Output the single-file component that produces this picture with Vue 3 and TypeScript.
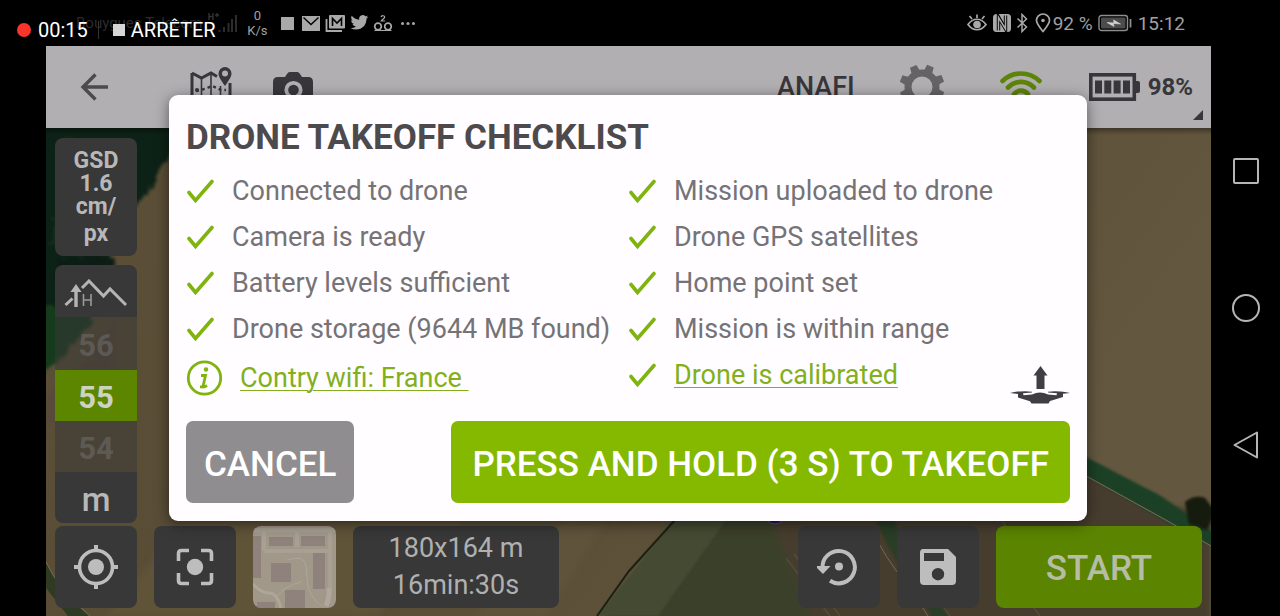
<script setup lang="ts">
import { ref } from 'vue'

const altitude = ref<number>(55)
const leftChecks: string[] = [
  'Connected to drone',
  'Camera is ready',
  'Battery levels sufficient',
  'Drone storage (9644 MB found)',
]
const rightChecks: string[] = [
  'Mission uploaded to drone',
  'Drone GPS satellites',
  'Home point set',
  'Mission is within range',
]
const gearTeeth: number[] = [22, 67, 112, 157, 202, 247, 292, 337]
</script>

<template>
  <div class="screen">
    <header class="status">
      <span class="carrier">Bouygues Telecom</span>
      <svg class="signal" width="30" height="22" viewBox="0 0 30 22" aria-hidden="true">
        <path d="M2 1v7M6 1v7M2 4.500h4M8 3h4M10 1v4" stroke="#333" stroke-width="1.400" fill="none" />
        <path d="M12.500 18v2M17 15v5M21.500 11v9M25 7v13M29 3v17" stroke="#2c2c2c" stroke-width="2" />
      </svg>
      <div class="rate"><span>0</span><span>K/s</span></div>
      <svg class="notif" width="138" height="20" viewBox="0 0 138 20" aria-hidden="true">
        <rect x="1" y="4" width="13" height="13" fill="#a9a9a9" />
        <rect x="22" y="3" width="18" height="15" fill="#a9a9a9" />
        <path d="M23.500 4.500l7.500 7 7.500-7" fill="none" stroke="#000" stroke-width="1.400" />
        <path d="M46.500 6v12H62" fill="none" stroke="#a9a9a9" stroke-width="1.800" />
        <rect x="49" y="2" width="16" height="13.500" rx="1" fill="#a9a9a9" />
        <path d="M52.500 13V5.500l4.500 4.500 4.500-4.500V13" fill="none" stroke="#000" stroke-width="1.600" />
        <g transform="translate(70.500 .5) scale(.74)">
          <path fill="#a9a9a9" d="M23.950 4.570a10 10 0 0 1-2.820.77 4.960 4.960 0 0 0 2.160-2.720c-.95.550-2 .950-3.120 1.180a4.920 4.920 0 0 0-8.380 4.480C7.690 8.100 4.070 6.130 1.640 3.160a4.820 4.820 0 0 0-.67 2.480c0 1.710.87 3.210 2.190 4.100a4.900 4.900 0 0 1-2.230-.620v.060a4.920 4.920 0 0 0 3.950 4.830 5 5 0 0 1-2.210.080 4.940 4.940 0 0 0 4.600 3.420A9.870 9.870 0 0 1 0 19.540a13.940 13.940 0 0 0 7.550 2.210c9.050 0 14-7.500 14-13.990 0-.21 0-.420-.02-.630a9.940 9.940 0 0 0 2.420-2.560z" />
        </g>
        <g fill="none" stroke="#a9a9a9" stroke-width="1.700">
          <circle cx="98" cy="13.500" r="3.300" /><circle cx="108" cy="13.500" r="3.300" />
          <path d="M94.500 17.500h17M101 4.200c.4-2 4-2 3.600.2-.2 1.200-2.600 2.200-3.400 3.600h4" stroke-width="1.200" />
        </g>
        <g fill="#a9a9a9"><circle cx="122.500" cy="10.500" r="1.500" /><circle cx="128" cy="10.500" r="1.500" /><circle cx="133.500" cy="10.500" r="1.500" /></g>
      </svg>
      <div class="status-right">
        <svg width="68" height="20" viewBox="0 0 68 20" aria-hidden="true">
          <g fill="none" stroke="#a9a9a9" stroke-width="1.700">
            <path d="M1 11.500c5-7 13-7 18 0-5 7-13 7-18 0zM10 5V1.500M5 6L2.500 3M15 6l2.500-3" />
            <circle cx="10" cy="11.500" r="3" fill="#a9a9a9" />
          </g>
          <rect x="26" y="1" width="18" height="18" rx="3.500" fill="#a9a9a9" />
          <path d="M31.500 17.500V4l7 12V2.500" fill="none" stroke="#000" stroke-width="3.400" />
          <path d="M31.500 18V4.500l7 11.500V2" fill="none" stroke="#a9a9a9" stroke-width="1.500" />
          <path d="M50.500 5.500l9 8.500-4.500 4.500v-17l4.500 4.500-9 8.500" fill="none" stroke="#a9a9a9" stroke-width="1.500" />
        </svg>
        <svg width="16" height="20" viewBox="0 0 16 20" aria-hidden="true">
          <path d="M8 18.500C4 13.500 1.500 10.500 1.500 7.500a6.500 6.500 0 0 1 13 0c0 3-2.500 6-6.500 11z" fill="none" stroke="#a9a9a9" stroke-width="1.700" />
          <circle cx="8" cy="7.500" r="1.800" fill="#a9a9a9" />
        </svg>
        <span class="pct">92 %</span>
        <svg class="phone-batt" width="34" height="18" viewBox="0 0 34 18" aria-hidden="true">
          <rect x="1" y="1.500" width="28.500" height="15" rx="2.500" fill="none" stroke="#8d8d8d" stroke-width="1.400" />
          <rect x="3" y="3.500" width="24.500" height="11" rx="1" fill="#4c4c4c" />
          <path d="M9 8.500l7 .5-.5-3 7 4-7-.5.5 3z" fill="#d5d5d5" stroke="#d5d5d5" stroke-width=".6" />
          <path d="M32.500 5v8.500" stroke="#8d8d8d" stroke-width="1.800" />
        </svg>
        <span class="clock">15:12</span>
      </div>
      <div class="recorder">
        <span class="rec-dot"></span>
        <span>00:15</span>
        <span class="rec-sep"></span>
        <button type="button" class="rec-stop"><span class="rec-square"></span>ARRÊTER</button>
      </div>
    </header>

    <main class="app">
      <div class="topbar">
        <button type="button" class="tool back" aria-label="Back">
          <svg width="28" height="28" viewBox="0 0 28 28"><path d="M28 14H4M15.500 1.500L3 14l12.500 12.500" fill="none" stroke="#4c4a4d" stroke-width="3.400" /></svg>
        </button>
        <button type="button" class="tool missions" aria-label="Missions">
          <svg width="42" height="42" viewBox="0 0 42 42">
            <path d="M2 7v28l9.500 4 9.500-4 9.500 4 9.500-4V17M2 7l9.500 5L21 7l6 3.500" fill="none" stroke="#38363a" stroke-width="3" />
            <path d="M11.500 12v27M21 7v28M30.500 20v19" fill="none" stroke="#38363a" stroke-width="1.600" />
            <path d="M6 25l5-1 6-2 5-2 5 2 4 2h5" fill="none" stroke="#38363a" stroke-width="2.400" stroke-dasharray="3 3" />
            <circle cx="7" cy="24" r="2" fill="#38363a" />
            <path fill="#38363a" fill-rule="evenodd" d="M35 20c-4-6-6.500-9-6.500-12.500a6.500 6.500 0 0 1 13 0C41.500 11 39 14 35 20zm0-15.500a3 3 0 1 0 0 6 3 3 0 0 0 0-6z" />
          </svg>
        </button>
        <button type="button" class="tool camera" aria-label="Camera">
          <svg width="40" height="32" viewBox="0 0 40 32">
            <path fill="#38363a" d="M5 6h7l2-3q1-2 3-2h7q2 0 3 2l2 3h6q5 0 5 5v16q0 5-5 5H5q-5 0-5-5V11q0-5 5-5z" />
            <circle cx="20.500" cy="19" r="7.200" fill="none" stroke="#b1afb2" stroke-width="3.800" />
          </svg>
        </button>
        <span class="model">ANAFI</span>
        <button type="button" class="tool" aria-label="Settings">
          <svg width="46" height="46" viewBox="-23 -23 46 46">
            <circle r="14" fill="none" stroke="#656366" stroke-width="7" />
            <path v-for="a in gearTeeth" :key="a" :transform="`rotate(${a})`" d="M-4.500-15L-3.500-22.500h7L4.500-15z" fill="#656366" />
          </svg>
        </button>
        <svg class="wifi" width="44" height="34" viewBox="0 0 44 34" aria-label="Signal" role="img">
          <g fill="none" stroke="#5c8406" stroke-width="4.600" stroke-linecap="round">
            <path d="M3.500 11C14 1 30 1 40.500 11M9 17.500c7.500-7.500 18.500-7.500 26 0M15 24c4-4.500 10-4.500 14 0" />
          </g>
          <circle cx="22" cy="29.500" r="3.200" fill="#5c8406" />
        </svg>
        <div class="drone-batt">
          <svg width="51" height="28" viewBox="0 0 51 28" aria-hidden="true">
            <rect x="1.800" y="1.800" width="43.500" height="24.400" fill="none" stroke="#38363a" stroke-width="3.600" />
            <path d="M47 8h2q2 0 2 2v8q0 2-2 2h-2z" fill="#38363a" />
            <path d="M6 7.500h7v13H6zM15.300 7.500h7v13h-7zM24.600 7.500h7v13h-7zM34 7.500h7v13h-7z" fill="#38363a" />
          </svg>
          <span>98%</span>
        </div>
        <span class="corner"></span>
      </div>

      <section class="mission">
        <svg class="map" viewBox="0 0 1165 488" preserveAspectRatio="xMidYMid slice" aria-hidden="true">
          <defs>
            <filter id="soft" x="-10%" y="-10%" width="120%" height="120%"><feGaussianBlur stdDeviation="3" /></filter>
            <filter id="edge" x="-10%" y="-10%" width="120%" height="120%"><feGaussianBlur stdDeviation="1" /></filter>
            <filter id="leaf" x="-10%" y="-10%" width="120%" height="120%">
              <feTurbulence type="fractalNoise" baseFrequency=".09" numOctaves="3" seed="4" result="n" />
              <feDisplacementMap in="SourceGraphic" in2="n" scale="16" xChannelSelector="R" yChannelSelector="G" />
              <feGaussianBlur stdDeviation="1.5" />
            </filter>
            <linearGradient id="ground" x1="0" x2="1" y1="0" y2=".3">
              <stop offset="0" stop-color="#5c4f38" /><stop offset=".5" stop-color="#584c35" /><stop offset="1" stop-color="#63573f" />
            </linearGradient>
            <linearGradient id="shade" x1="0" x2="0" y1="0" y2="1">
              <stop offset="0" stop-color="#000" stop-opacity=".35" /><stop offset="1" stop-color="#000" stop-opacity="0" />
            </linearGradient>
          </defs>
          <rect width="1165" height="488" fill="url(#ground)" />
          <g filter="url(#soft)">
            <path d="M60 488L140 392H420L330 488z" fill="#5f5238" />
            <path d="M0 270L40 230 70 190V260L0 300z" fill="#574a3a" />
            <path d="M430 488L520 392H560L500 488z" fill="#61533a" />
            <path d="M700 380H1165V500H740z" fill="#463e2d" />
            <path d="M551 500L638 380H720L770 500z" fill="#3b412a" />
            <path d="M1042 340L1165 410V500H990V380z" fill="#473e2d" />
          </g>
          <path d="M551 488L629 392H680L612 488z" fill="#444b31" filter="url(#edge)" />
          <g filter="url(#leaf)">
            <path d="M-12-12H150L116 42 100 68 82 82 68 128 62 158 40 196 22 220-12 248z" fill="#0e2418" />
            <path d="M10 130h60l-14 40H10z" fill="#0b1c13" />
            <path d="M20 10l60 12-12 40-46-14zM6 90l54 8-14 30-40-8z" fill="#122a1b" />
            <path d="M-12 180h30l30 14-40 42-20 16z" fill="#173a1d" />
          </g>
          <path d="M551 488L583 443 629 392" fill="none" stroke="#1c2115" stroke-width="2" />
          <g fill="none" stroke="#5e563e" stroke-width="2" opacity=".5">
            <path d="M740 430l44 58M748 426l46 62M880 455l24 33M970 455l24 33M1046 400l60 30M956 392l14 24" />
          </g>
          <path d="M1030 324L1042 330 1115 368 1170 406V420L1118 392 1042 349 1030 342z" fill="#1d4128" filter="url(#edge)" />
          <path d="M1036 346L1042 349 1118 391 1165 418" fill="none" stroke="#73705a" stroke-width="1" />
          <path d="M828 388q14 34 30 56t30 48h16q-18-28-30-50t-28-54z" fill="#1d3d23" opacity=".65" filter="url(#edge)" />
          <path d="M824 400q16 30 34 54t24 34" fill="none" stroke="#6b6b57" stroke-width="1" />
          <path d="M1139 374q10-8 20-4l10 14-8 18-18-6z" fill="#121c0e" filter="url(#edge)" />
          <path d="M0 434q14 30 44 54H22L0 460z" fill="#2f3a23" />
          <path d="M0 434q14 30 44 54" fill="none" stroke="#777059" stroke-width="1" />
          <circle cx="729" cy="386" r="10" fill="#2b1659" stroke="#5b48a0" stroke-width="1" />
          <rect width="1165" height="7" fill="url(#shade)" />
        </svg>

        <div class="side">
          <div class="gsd"><span>GSD</span><span>1.6</span><span>cm/</span><span class="px">px</span></div>
          <div class="altitude">
            <div class="alt-head">
              <svg width="64" height="28" viewBox="0 0 64 28" aria-hidden="true">
                <path d="M1.500 26l7-6.500M18 9l7-7 14.500 15 6.500-7L62 26" fill="none" stroke="#b5b5b5" stroke-width="3" />
                <path d="M10.300 28V13H6.500l5.500-8 5.500 8h-3.800v15z" fill="#b5b5b5" />
                <path d="M19.500 15v12M27 15v12M19.500 21H27" fill="none" stroke="#9a9a9a" stroke-width="1.600" />
              </svg>
            </div>
            <button type="button" class="alt-side" @click="altitude++">{{ altitude + 1 }}</button>
            <output class="alt-now">{{ altitude }}</output>
            <button type="button" class="alt-side" @click="altitude--">{{ altitude - 1 }}</button>
            <div class="alt-unit">m</div>
          </div>
        </div>

        <div class="bottom">
          <button type="button" class="tile" aria-label="Centre on me">
            <svg width="46" height="46" viewBox="-23 -23 46 46">
              <circle r="16.500" fill="none" stroke="#bdbdbd" stroke-width="3.600" /><circle r="8" fill="#bdbdbd" />
              <path d="M0-22v5M0 22v-5M-22 0h5M22 0h-5" stroke="#bdbdbd" stroke-width="4" />
            </svg>
          </button>
          <button type="button" class="tile" aria-label="Centre on mission">
            <svg width="38" height="38" viewBox="-19 -19 38 38">
              <circle r="8.200" fill="#bdbdbd" />
              <path d="M-16.500-6v-7.500q0-3 3-3H-6M6-16.500h7.500q3 0 3 3V-6M16.500 6v7.500q0 3-3 3H6M-6 16.500h-7.500q-3 0-3-3V6" fill="none" stroke="#bdbdbd" stroke-width="3.600" />
            </svg>
          </button>
          <button type="button" class="tile layer" aria-label="Map style">
            <svg width="83" height="82" viewBox="0 0 83 82">
              <rect width="83" height="82" fill="#a1988a" />
              <path d="M0 4h83M11 5v20M44 5v16M11 25h66M77 5v60" fill="none" stroke="#a8a092" stroke-width="4" />
              <path d="M24 70q8-10 24-14M34 34q18-6 19 6t2 20q4 14 14 20" fill="none" stroke="#aea698" stroke-width="1" />
              <path d="M0 58q8 9 16 9t12 15" fill="none" stroke="#aea698" stroke-width="3" />
              <path d="M16 11h24v9H16zM48 10h24v10H48zM0 10h8v42H0zM18 37h20v19H18zM60 27h12v36H60zM32 64h20v18H32zM4 76h18v6H4z" fill="#8f817b" />
              <path d="M76 62q1 8-3 18" fill="none" stroke="#b0a89c" stroke-width="5" />
            </svg>
          </button>
          <div class="stats"><span>180x164 m</span><span>16min:30s</span></div>
          <button type="button" class="tile push" aria-label="Restore">
            <svg width="44" height="38" viewBox="2 0 44 38">
              <path d="M7.500 20A16.200 16.200 0 1 1 15 32.800" fill="none" stroke="#bdbdbd" stroke-width="4" />
              <path d="M0 18h15.500L8 26z" fill="#bdbdbd" /><circle cx="24" cy="18.500" r="4" fill="#bdbdbd" />
            </svg>
          </button>
          <button type="button" class="tile" aria-label="Save">
            <svg width="38" height="38" viewBox="0 0 38 38">
              <path fill="#bdbdbd" fill-rule="evenodd" d="M4 1h25l8 8v24q0 4-4 4H5q-4 0-4-4V5q0-4 3-4zM5 5v8h20V5zM19 20a6.200 6.200 0 1 0 0 12.400A6.200 6.200 0 0 0 19 20z" />
            </svg>
          </button>
          <button type="button" class="start">START</button>
        </div>
      </section>
    </main>

    <nav class="sysnav">
      <button type="button" aria-label="Recent apps"><svg width="28" height="28" viewBox="0 0 28 28"><rect x="2" y="2" width="24" height="24" rx="1" /></svg></button>
      <button type="button" aria-label="Home"><svg width="28" height="28" viewBox="0 0 28 28"><circle cx="14" cy="14" r="13" /></svg></button>
      <button type="button" aria-label="Back"><svg width="28" height="28" viewBox="0 0 28 28"><path d="M25 1.500v25L2.500 14z" stroke-linejoin="round" /></svg></button>
    </nav>

    <div class="overlay">
      <div class="dialog" role="dialog" aria-labelledby="dlg-title">
        <h1 id="dlg-title">DRONE TAKEOFF CHECKLIST</h1>
        <div class="lists">
          <ul>
            <li v-for="t in leftChecks" :key="t">
              <svg class="tick" width="28" height="26" viewBox="0 0 28 26" aria-hidden="true"><path d="M3 14.500l6.500 8L26 3.500" /></svg>{{ t }}
            </li>
            <li class="info">
              <svg width="36" height="36" viewBox="0 0 36 36" aria-hidden="true">
                <circle cx="18.500" cy="18" r="16.200" fill="none" stroke="#7fb30d" stroke-width="2.800" />
                <circle cx="20" cy="9.500" r="2.200" fill="#7fb30d" />
                <path d="M15 15.500h4.500L17 26.500q0 1.500 4-1M14 26.800h5" fill="none" stroke="#7fb30d" stroke-width="2.800" />
              </svg>
              <a href="#">Contry wifi: France&nbsp;</a>
            </li>
          </ul>
          <ul>
            <li v-for="t in rightChecks" :key="t">
              <svg class="tick" width="28" height="26" viewBox="0 0 28 26" aria-hidden="true"><path d="M3 14.500l6.500 8L26 3.500" /></svg>{{ t }}
            </li>
            <li>
              <svg class="tick" width="28" height="26" viewBox="0 0 28 26" aria-hidden="true"><path d="M3 14.500l6.500 8L26 3.500" /></svg>
              <a href="#">Drone is calibrated</a>
              <svg class="drone" width="60" height="38" viewBox="0 0 60 38" aria-hidden="true">
                <g fill="#403e42">
                  <path d="M30.500 0l7 9.500H34.500v13.500h-8V9.500H23.500z" />
                  <path d="M0 27q6-1.800 10-1.600 7-.6 12 .4v.8l-9 .6.500 2 8.500-.7q4-2 8-2t8 2l8.500.7.5-2-9-.6v-.8q5-1 12-.4 4-.2 10 1.600l-7 .8v3.200l-13 4-1.500 2.500h-17L20 35.200 8 31.500V28z" />
                </g>
              </svg>
            </li>
          </ul>
        </div>
        <div class="actions">
          <button type="button" class="cancel">CANCEL</button>
          <button type="button" class="takeoff">PRESS AND HOLD (3 S) TO TAKEOFF</button>
        </div>
      </div>
    </div>
  </div>
</template>

<style>
body { margin: 0; background: #000; }
</style>

<style scoped>
.screen {
  display: grid;
  grid-template-columns: 46px minmax(0, 1fr) 69px;
  grid-template-rows: 46px 1fr;
  min-height: 100vh;
  background: #000;
  font-family: Roboto, "Liberation Sans", sans-serif;
}
button {
  border: 0;
  padding: 0;
  background: none;
  font: inherit;
  color: inherit;
  cursor: pointer;
}
svg { display: block; flex: none; }

.status {
  grid-column: 1 / 3;
  grid-row: 1;
  position: relative;
  display: flex;
  align-items: center;
  padding: 0 26px 0 76px;
  color: #a0a0a0;
  white-space: nowrap;
}
.carrier { font-size: 15px; color: #2b2b2b; }
.signal { margin-left: 5px; }
.rate {
  display: flex;
  flex-direction: column;
  align-items: center;
  margin-left: 10px;
  font-size: 13px;
  line-height: 15px;
}
.notif { margin-left: 12px; }
.status-right { display: flex; align-items: center; margin-left: auto; font-size: 19px; }
.status-right .pct { margin-left: 2px; }
.phone-batt { margin: 0 6px 0 5px; }
.recorder {
  position: absolute;
  left: 17px;
  top: 18px;
  display: flex;
  align-items: center;
  font-size: 20px;
  line-height: 24px;
  color: #fff;
}
.rec-dot { width: 14px; height: 14px; border-radius: 50%; background: #f8352a; margin-right: 7px; }
.rec-sep { width: 1px; height: 18px; background: #333; margin: 0 14px 0 10px; }
.rec-stop { display: flex; align-items: center; }
.rec-square { width: 12px; height: 12px; background: #d6d6d6; margin-right: 6px; }

.app { grid-column: 2; grid-row: 2; display: flex; flex-direction: column; }
.topbar {
  position: relative;
  display: flex;
  align-items: center;
  height: 82px;
  padding: 0 18px 0 34px;
  background: #b1afb2;
  color: #38363a;
}
.missions { margin-left: 82px; }
.camera { margin-left: 41px; }
.model { margin: 0 44px 0 auto; font-size: 27px; font-weight: 500; }
.wifi { margin: 0 46px 0 54px; }
.drone-batt { display: flex; align-items: center; gap: 8px; font-size: 24px; font-weight: 700; }
.corner {
  position: absolute;
  right: 8px;
  bottom: 8px;
  border-left: 10px solid transparent;
  border-bottom: 10px solid #38363a;
}

.mission {
  position: relative;
  flex: 1;
  display: flex;
  flex-direction: column;
  justify-content: space-between;
  gap: 3px;
  padding: 10px 9px 8px;
  overflow: hidden;
}
.map { position: absolute; inset: 0; width: 100%; height: 100%; }
.side { position: relative; display: flex; flex-direction: column; gap: 9px; width: 82px; }
.gsd {
  display: flex;
  flex-direction: column;
  align-items: center;
  padding: 11px 0 7px;
  border-radius: 8px;
  background: #383838;
  color: #b8b8b8;
  font-size: 23px;
  font-weight: 700;
  line-height: 23px;
}
.px { line-height: 31px; }
.altitude {
  display: grid;
  grid-template-rows: 52px 53px 51px 51px 51px;
  border-radius: 8px;
  overflow: hidden;
  text-align: center;
  font-weight: 700;
  font-size: 31px;
  line-height: 48px;
}
.altitude > * { padding-top: 4px; }
.alt-head { display: grid; place-items: center; background: #383838; }
.alt-side { background: rgba(56, 56, 56, 0.5); color: rgba(120, 120, 120, 0.45); }
.alt-now { background: #5c8500; color: #ccd3c0; }
.alt-unit { background: #383838; color: #b8b8b8; font-size: 33px; font-weight: 500; }

.bottom { position: relative; display: flex; gap: 17px; }
.tile {
  display: grid;
  place-items: center;
  width: 82px;
  height: 82px;
  border-radius: 8px;
  overflow: hidden;
  background: #383838;
}
.layer { width: 83px; }
.push { margin-left: auto; }
.stats {
  display: flex;
  flex-direction: column;
  justify-content: center;
  align-items: center;
  width: 206px;
  border-radius: 8px;
  background: #383838;
  color: #b0b0b0;
  font-size: 27px;
  line-height: 37px;
}
.start {
  width: 206px;
  padding-top: 3px;
  border-radius: 8px;
  background: #5b8400;
  color: #b6bda6;
  font-size: 35px;
  font-weight: 500;
}

.sysnav {
  grid-column: 3;
  grid-row: 1 / 3;
  display: flex;
  flex-direction: column;
  justify-content: center;
  align-items: center;
  gap: 89px;
}
.sysnav button { display: grid; place-items: center; width: 48px; height: 48px; }
.sysnav svg { fill: none; stroke: #b5b5b5; stroke-width: 2; }

.overlay {
  grid-column: 2;
  grid-row: 1 / 3;
  z-index: 2;
  display: grid;
  align-items: center;
  padding: 0 124px 0 123px;
}
.dialog {
  padding: 22px 17px 18px;
  border-radius: 9px;
  background: #fffdff;
  box-shadow: 0 3px 14px rgba(0, 0, 0, 0.5);
}
h1 { margin: 0 0 9px; font-size: 35px; line-height: 42px; font-weight: 700; color: #4c4a4d; }
.lists { display: grid; grid-template-columns: 1fr 1fr; }
ul { list-style: none; margin: 0; padding: 0; }
li {
  display: flex;
  align-items: center;
  height: 46px;
  font-size: 27px;
  color: #757376;
  white-space: nowrap;
}
.tick { margin-right: 18px; fill: none; stroke: #7fb30d; stroke-width: 3.6; stroke-linecap: round; }
.info { height: 52px; gap: 18px; }
a { color: #82b01c; text-decoration: underline; text-decoration-thickness: 1px; text-underline-offset: 3px; }
.drone { margin: 20px 0 0 auto; }
.actions { display: flex; justify-content: space-between; margin-top: 17px; }
.actions button {
  height: 82px;
  padding: 4px 18px 0;
  border-radius: 7px;
  color: #fff;
  font-size: 35px;
  font-weight: 500;
  white-space: nowrap;
}
.actions .cancel { background: #8f8d90; }
.actions .takeoff { padding: 4px 21px 0; background: #84b900; }
</style>
